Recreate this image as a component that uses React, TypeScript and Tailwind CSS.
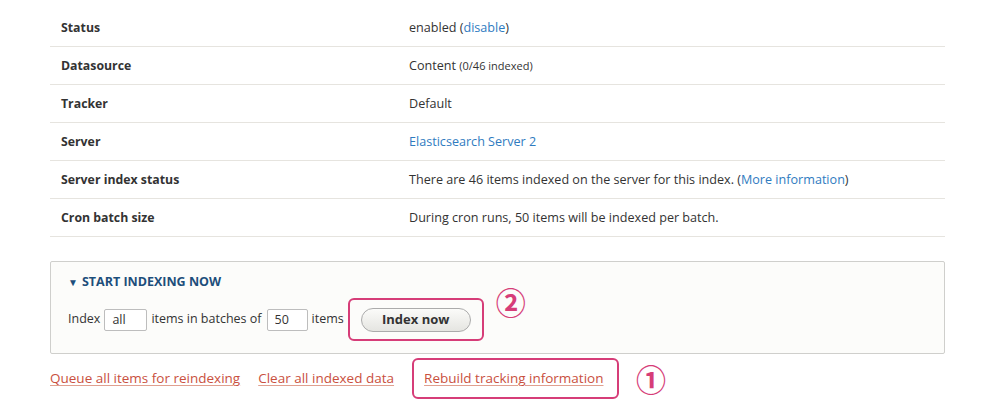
const rows: { label: string; value: React.ReactNode }[] = [
  {
    label: 'Status',
    value: (
      <>
        enabled (<a className="text-[#2f7bbf]">disable</a>)
      </>
    ),
  },
  {
    label: 'Datasource',
    value: (
      <>
        Content <span className="text-[11px]">(0/46 indexed)</span>
      </>
    ),
  },
  { label: 'Tracker', value: 'Default' },
  {
    label: 'Server',
    value: <a className="text-[#2f7bbf]">Elasticsearch Server 2</a>,
  },
  {
    label: 'Server index status',
    value: (
      <>
        There are 46 items indexed on the server for this index. (
        <a className="text-[#2f7bbf]">More information</a>)
      </>
    ),
  },
  {
    label: 'Cron batch size',
    value: 'During cron runs, 50 items will be indexed per batch.',
  },
];

function Marker({ n }: { n: string }) {
  return (
    <span className="text-[30px] leading-none font-bold text-[#d63d78] [font-family:'Noto_Sans_CJK_JP',sans-serif]">
      {n}
    </span>
  );
}

export default function App() {
  return (
    <div className="min-h-[414px] bg-white pl-[50px] pr-[41px] pt-[9px] text-[13px] text-[#333] [font-family:'Open_Sans',sans-serif]">
      <div>
        {rows.map((row) => (
          <div
            key={row.label}
            className="grid h-[38px] grid-cols-[359px_1fr] items-center border-b border-[#e6e4df] pt-[2px]"
          >
            <div className="pl-[11px] text-[12.3px] font-bold">{row.label}</div>
            <div className="text-[12.6px]">{row.value}</div>
          </div>
        ))}
      </div>

      <div className="mt-[24px] rounded-[2px] border border-[#cfcfcc] bg-[#fcfcfa] px-[17px] pt-[13px] pb-[12px]">
        <div className="flex items-center gap-[4px] text-[12.5px] leading-[14px] font-bold text-[#1d4e7b]">
          <span className="text-[10px]">▼</span>
          <span>START INDEXING NOW</span>
        </div>
        <div className="mt-[9px] flex items-center text-[12.5px]">
          <span>Index</span>
          <input
            readOnly
            value="all"
            className="mx-[4px] h-[22px] w-[43px] rounded-[2px] border border-[#bdbdbd] bg-white pl-[7px] outline-none"
          />
          <span>items in batches of</span>
          <input
            readOnly
            value="50"
            className="ml-[5px] mr-[4px] h-[22px] w-[41px] rounded-[2px] border border-[#bdbdbd] bg-white pl-[7px] outline-none"
          />
          <span>items</span>
          <div className="relative ml-[4px] flex h-[43px] items-center rounded-[6px] border-2 border-[#d63d78] px-[11px]">
            <button className="flex h-[24px] w-[110px] items-center justify-center rounded-full border border-[#ababab] bg-gradient-to-b from-[#fbfbf9] to-[#e5e5e1] text-[13px] font-bold text-[#333]">
              Index now
            </button>
            <div className="absolute top-[-14px] left-[calc(100%+14px)]">
              <Marker n="②" />
            </div>
          </div>
        </div>
      </div>

      <div className="mt-[4px] flex items-center gap-[18px] text-[13.5px] text-[#c9503e]">
        <a className="underline decoration-[#e0a090] underline-offset-2">
          Queue all items for reindexing
        </a>
        <a className="underline decoration-[#e0a090] underline-offset-2">
          Clear all indexed data
        </a>
        <div className="relative flex h-[41px] w-[207px] items-center rounded-[6px] border-2 border-[#d63d78] px-[10px]">
          <a className="underline decoration-[#e0a090] underline-offset-2">
            Rebuild tracking information
          </a>
          <div className="absolute top-[3px] left-[calc(100%+19px)]">
            <Marker n="①" />
          </div>
        </div>
      </div>
    </div>
  );
}
